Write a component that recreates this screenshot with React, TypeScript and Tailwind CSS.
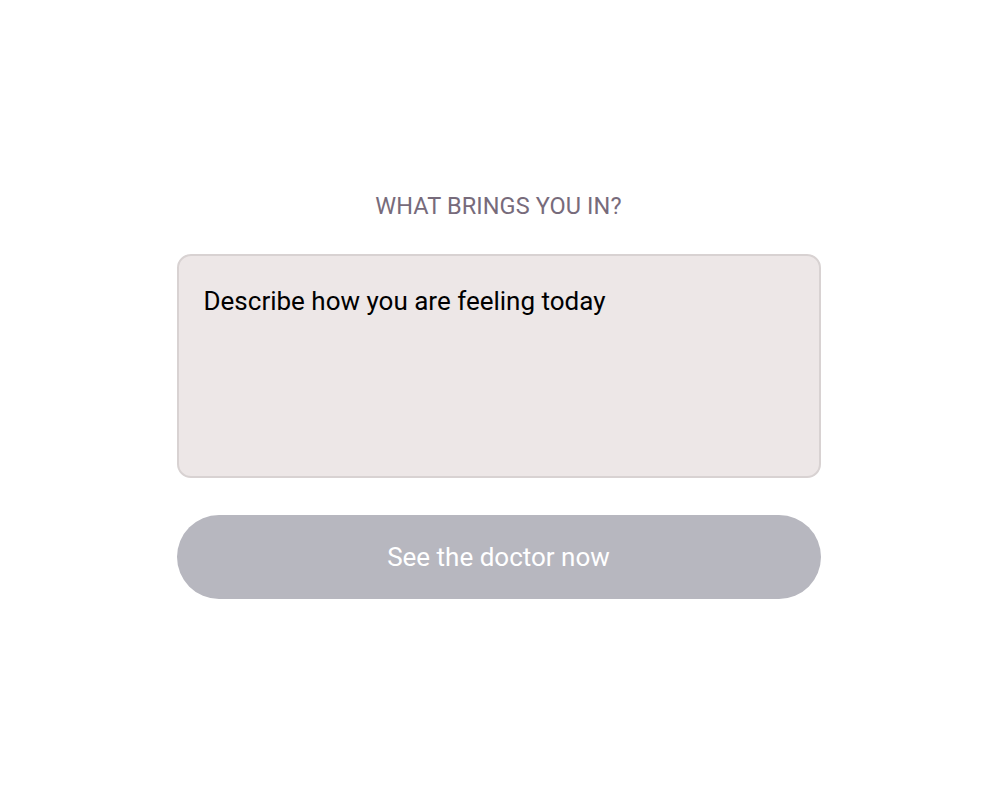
export default function App() {
  return (
    <div className="min-h-screen bg-white flex flex-col items-center pt-[191px]" style={{ fontFamily: 'Roboto, "Liberation Sans", sans-serif' }}>
      <div className="w-[644px] mr-[3px] flex flex-col items-center">
        <h2 className="text-[23.5px] leading-[30px] text-[#776b7b] tracking-[0.1px]">WHAT BRINGS YOU IN?</h2>
        <textarea
          className="mt-[33px] w-full h-[224px] rounded-[14px] border-2 border-[#d8d2d2] bg-[#ede7e7] px-[25px] pt-[29px] text-[26px] leading-[32px] text-black placeholder:text-black resize-none outline-none"
          placeholder="Describe how you are feeling today"
        />
        <button className="mt-[37px] w-full h-[84px] rounded-full bg-[#b7b7bf] text-white text-[26px]">
          See the doctor now
        </button>
      </div>
    </div>
  );
}
